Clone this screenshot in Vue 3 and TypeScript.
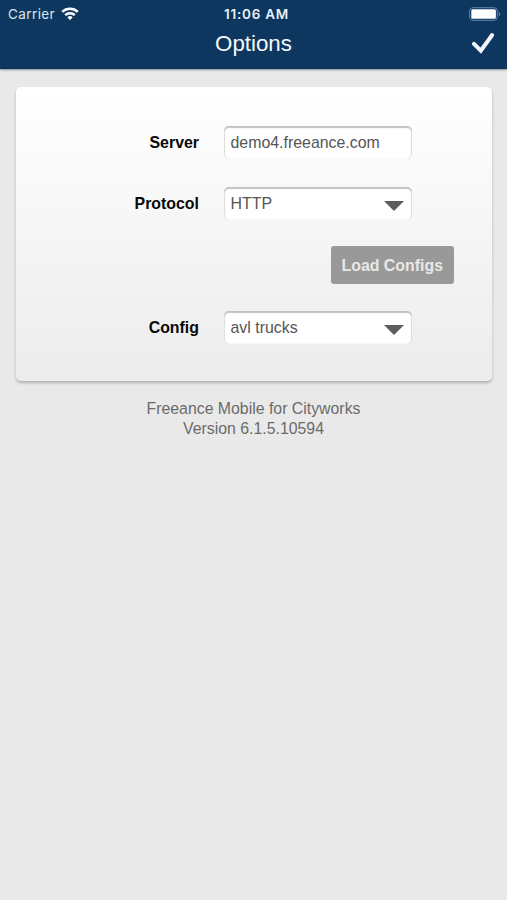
<script setup lang="ts">
import { ref } from 'vue'

const server = ref('demo4.freeance.com')
const protocol = ref('HTTP')
const config = ref('avl trucks')
</script>

<template>
  <div class="screen">
    <header class="header">
      <div class="status">
        <div class="carrier">
          <span class="carrier-name">Carrier</span>
          <svg class="wifi" viewBox="0 0 18 13" width="18" height="13" fill="none" stroke="#fff" stroke-width="2.5">
            <path d="M1.2 4.8a11.4 11.4 0 0 1 15.6 0" />
            <path d="M4.2 8.2a6.9 6.9 0 0 1 9.6 0" />
            <path d="M9 13 6.4 10.4a3.7 3.7 0 0 1 5.2 0z" fill="#fff" stroke="none" />
          </svg>
        </div>
        <time class="clock">11:06 AM</time>
        <svg class="battery" viewBox="0 0 32 14" width="32" height="14">
          <rect x=".7" y=".7" width="27.6" height="12.6" rx="3.2" fill="none" stroke="#6685a5" stroke-width="1" />
          <rect x="2.3" y="2.2" width="24.6" height="9.6" rx="1.6" fill="#fff" />
          <path d="M29.8 5v4q1.5-.6 1.5-2t-1.5-2z" fill="#6685a5" />
        </svg>
      </div>
      <div class="titlebar">
        <h1 class="title">Options</h1>
        <button class="done" aria-label="Done">
          <svg viewBox="0 0 24 22" width="24" height="22" fill="none" stroke="#f4f8fb" stroke-width="4">
            <path d="M3 10.8 9.8 17.6 21 2.2" stroke-linecap="round" stroke-linejoin="miter" />
          </svg>
        </button>
      </div>
    </header>

    <main class="card">
      <div class="row">
        <span class="label">Server</span>
        <div class="field"><span>{{ server }}</span></div>
      </div>
      <div class="row">
        <span class="label">Protocol</span>
        <div class="field">
          <span>{{ protocol }}</span>
          <svg class="arrow" viewBox="0 0 20 10" width="20" height="10"><path d="M0 0h20L10 10z" fill="#5d5d5d" /></svg>
        </div>
      </div>
      <div class="actions"><button class="load">Load Configs</button></div>
      <div class="row">
        <span class="label">Config</span>
        <div class="field">
          <span>{{ config }}</span>
          <svg class="arrow" viewBox="0 0 20 10" width="20" height="10"><path d="M0 0h20L10 10z" fill="#5d5d5d" /></svg>
        </div>
      </div>
    </main>

    <footer class="about">
      <div class="product">Freeance Mobile for Cityworks</div>
      <div class="version">Version 6.1.5.10594</div>
    </footer>
  </div>
</template>

<style>
body {
  background: #e9e9e9;
}
</style>

<style scoped>
.screen {
  min-height: 900px;
  background: #e9e9e9;
  font-family: "Liberation Sans", Arial, sans-serif;
}
.header {
  box-sizing: border-box;
  height: 69px;
  background: #0e3760;
  border-bottom: 1px solid #0c3054;
  box-shadow: 0 1px 2px rgba(40, 60, 80, .5);
  color: #fff;
}
.status {
  display: grid;
  grid-template-columns: 1fr auto 1fr;
  align-items: center;
  height: 27px;
  padding: 0 6px 0 8px;
  font-family: Inter, sans-serif;
  font-size: 13.5px;
}
.carrier {
  display: flex;
  align-items: center;
  gap: 6px;
}
.carrier-name {
  color: #d8e5f0;
  letter-spacing: .4px;
}
.clock {
  font-weight: 600;
  font-size: 13.5px;
  letter-spacing: .75px;
  color: #e8f1f8;
  padding-left: 4px;
}
.battery {
  justify-self: end;
}
.titlebar {
  display: grid;
  grid-template-columns: 1fr auto 1fr;
  align-items: center;
  height: 34px;
  padding: 0 12px;
}
.title {
  grid-column: 2;
  margin: 0;
  font-size: 22.3px;
  font-weight: 400;
  line-height: 34px;
  color: #f2f7fb;
}
.done {
  justify-self: end;
  display: flex;
  margin: 0;
  padding: 0;
  border: 0;
  background: none;
}
.card {
  box-sizing: border-box;
  height: 294px;
  margin: 18px 15px 0 16px;
  padding-top: 39px;
  border-radius: 5px;
  background: linear-gradient(#fff, #ececec);
  box-shadow: 0 2px 3px rgba(0, 0, 0, .24);
}
.row {
  display: grid;
  grid-template-columns: 183px 188px;
  column-gap: 25px;
  align-items: center;
  height: 33px;
  margin-bottom: 28px;
}
.label {
  padding-top: 1px;
  text-align: right;
  font-size: 15.9px;
  font-weight: 700;
  color: #080808;
}
.field {
  box-sizing: border-box;
  display: flex;
  align-items: center;
  justify-content: space-between;
  height: 33px;
  padding: 1px 8px 0 6.5px;
  border-radius: 5px;
  background: #fff;
  box-shadow: inset 0 2px 1px #c2c2c2, inset 1px 0 1px #e0e0e0, inset -1px 0 1px #e0e0e0;
  font-size: 15.9px;
  color: #555;
}
.arrow {
  margin-top: 3px;
}
.actions {
  display: flex;
  justify-content: flex-end;
  padding-right: 38px;
  margin: -2px 0 27px;
}
.load {
  width: 123.5px;
  height: 38px;
  padding: 1px 0 0;
  border: 0;
  border-radius: 3px;
  background: #999;
  color: #e8e8e8;
  font: 700 15.9px "Liberation Sans", Arial, sans-serif;
}
.about {
  padding-top: 18px;
  text-align: center;
  font-size: 15.85px;
  line-height: 20px;
  color: #6b6b6b;
}
</style>
